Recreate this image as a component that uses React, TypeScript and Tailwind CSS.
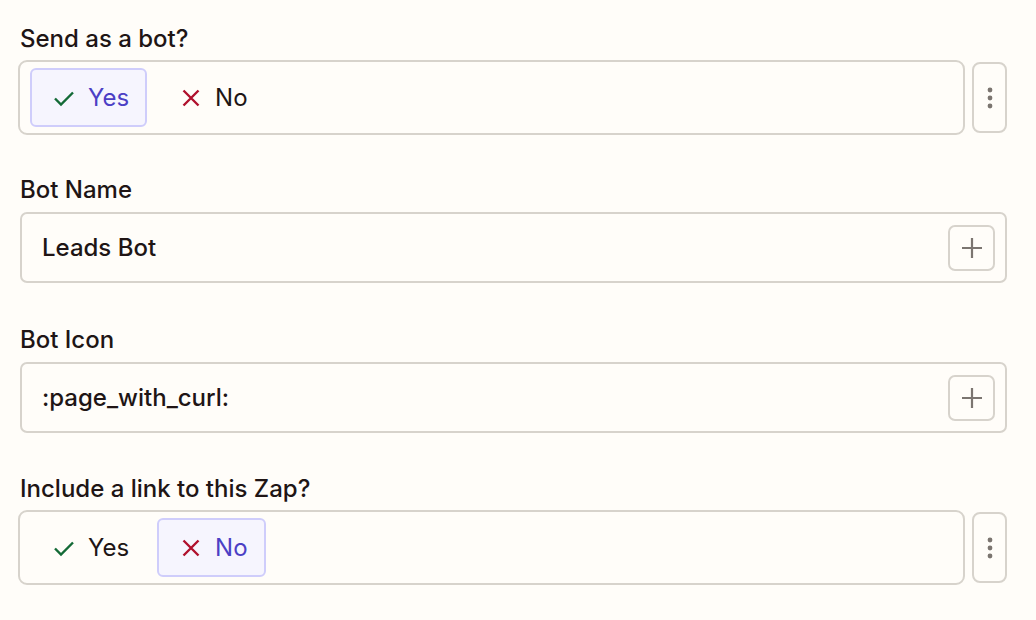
import { ReactNode } from 'react'

const font = { fontFamily: 'Inter, "Noto Sans", sans-serif' }

function Check() {
  return (
    <svg width="20" height="20" viewBox="0 0 20 20" fill="none" className="shrink-0">
      <path d="M1 10.5l6 6L19 4.5" stroke="#136a36" strokeWidth="2.4" />
    </svg>
  )
}

function Cross() {
  return (
    <svg width="20" height="20" viewBox="0 0 20 20" fill="none" className="shrink-0">
      <path d="M2.5 2.5l15 15M17.5 2.5l-15 15" stroke="#b0112d" strokeWidth="2.4" />
    </svg>
  )
}

function Kebab() {
  return (
    <button className="w-[35px] h-[71px] shrink-0 rounded-[8px] border-2 border-[#d7d3cc] flex items-center justify-center">
      <svg width="6" height="22" viewBox="0 0 6 22" fill="#7b7570">
        <circle cx="3" cy="3" r="2.4" />
        <circle cx="3" cy="11" r="2.4" />
        <circle cx="3" cy="19" r="2.4" />
      </svg>
    </button>
  )
}

function Plus() {
  return (
    <button className="w-[47px] h-[46px] shrink-0 rounded-[7px] border-2 border-[#d7d3cc] flex items-center justify-center">
      <svg width="22" height="22" viewBox="0 0 22 22" fill="none">
        <path d="M11 1v20M1 11h20" stroke="#7b7570" strokeWidth="2.2" />
      </svg>
    </button>
  )
}

function Option({ icon, label, selected }: { icon: ReactNode; label: string; selected: boolean }) {
  return (
    <div
      className={
        selected
          ? 'h-[59px] flex items-center gap-[14px] pl-[22px] pr-[16px] rounded-[6px] border-2 border-[#cfcdfb] bg-[#f6f5fe] text-[#4c3fc5]'
          : 'h-[59px] flex items-center gap-[14px] pl-[22px] pr-[16px] rounded-[6px] border-2 border-transparent text-[#201515]'
      }
    >
      {icon}
      <span className="text-[24px] leading-none">{label}</span>
    </div>
  )
}

function Toggle({ label, yes }: { label: string; yes: boolean }) {
  return (
    <section>
      <div className="pl-[20px] text-[24px] leading-[28px] font-medium text-[#201515] mb-[7px]">{label}</div>
      <div className="flex items-center gap-[7px] pl-[18px] pr-[29px]">
        <div className="flex-1 h-[75px] rounded-[9px] border-2 border-[#d7d3cc] flex items-center gap-[10px] px-[10px]">
          <Option icon={<Check />} label="Yes" selected={yes} />
          <Option icon={<Cross />} label="No" selected={!yes} />
        </div>
        <Kebab />
      </div>
    </section>
  )
}

function TextField({ label, value }: { label: string; value: string }) {
  return (
    <section>
      <div className="pl-[20px] text-[24px] leading-[28px] font-medium text-[#201515] mb-[8px]">{label}</div>
      <div className="ml-[20px] mr-[29px] h-[71px] rounded-[7px] border-2 border-[#d7d3cc] flex items-center pl-[20px] pr-[10px]">
        <span className="flex-1 text-[24px] font-medium text-[#201515]">{value}</span>
        <Plus />
      </div>
    </section>
  )
}

export default function App() {
  return (
    <div className="w-[1036px] h-[620px] bg-[#fffdf9] pt-[25px] overflow-hidden" style={font}>
      <Toggle label="Send as a bot?" yes={true} />
      <div className="mt-[41px]">
        <TextField label="Bot Name" value="Leads Bot" />
      </div>
      <div className="mt-[43px]">
        <TextField label="Bot Icon" value=":page_with_curl:" />
      </div>
      <div className="mt-[42px]">
        <Toggle label="Include a link to this Zap?" yes={false} />
      </div>
    </div>
  )
}
